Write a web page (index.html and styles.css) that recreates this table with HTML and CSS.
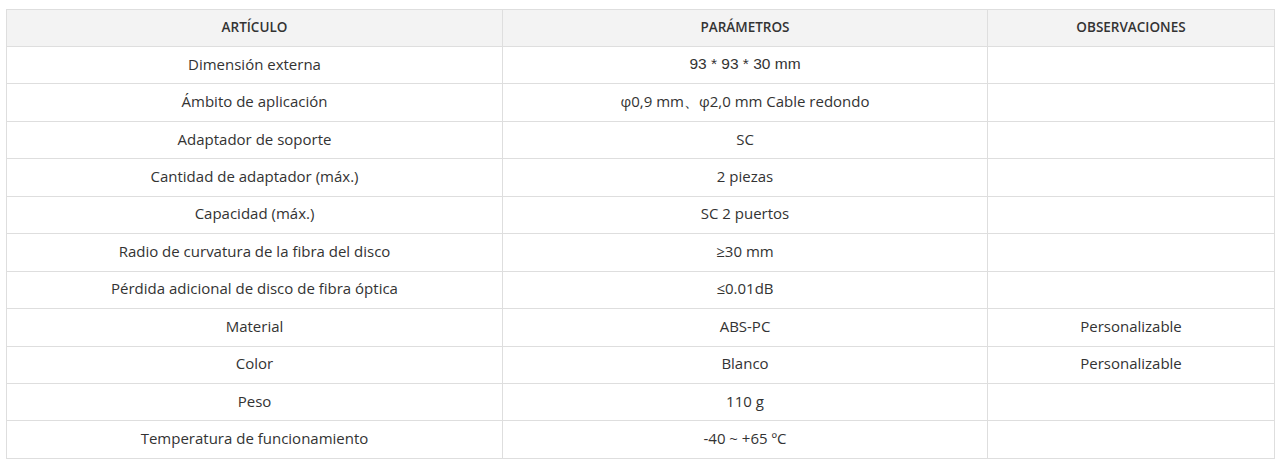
FILE: index.html
```html
<!DOCTYPE html>
<html lang="es">
<head>
<meta charset="utf-8">
<link rel="stylesheet" href="styles.css">
</head>
<body>
<table class="spec">
  <colgroup>
    <col class="c1"><col class="c2"><col class="c3">
  </colgroup>
  <thead>
    <tr><th>ARTÍCULO</th><th>PARÁMETROS</th><th>OBSERVACIONES</th></tr>
  </thead>
  <tbody>
    <tr><td>Dimensión externa</td><td class="alt">93 * 93 * 30 mm</td><td></td></tr>
    <tr><td>Ámbito de aplicación</td><td>φ0,9 mm、φ2,0 mm Cable redondo</td><td></td></tr>
    <tr><td>Adaptador de soporte</td><td>SC</td><td></td></tr>
    <tr><td>Cantidad de adaptador (máx.)</td><td>2 piezas</td><td></td></tr>
    <tr><td>Capacidad (máx.)</td><td>SC 2 puertos</td><td></td></tr>
    <tr><td>Radio de curvatura de la fibra del disco</td><td>≥30 mm</td><td></td></tr>
    <tr><td>Pérdida adicional de disco de fibra óptica</td><td>≤0.01dB</td><td></td></tr>
    <tr><td>Material</td><td>ABS-PC</td><td>Personalizable</td></tr>
    <tr><td>Color</td><td>Blanco</td><td>Personalizable</td></tr>
    <tr><td>Peso</td><td>110 g</td><td></td></tr>
    <tr><td>Temperatura de funcionamiento</td><td>-40 ~ +65 ºC</td><td></td></tr>
  </tbody>
</table>
</body>
</html>
```
FILE: styles.css
```css
html, body {
  margin: 0;
  background: #fff;
}
body {
  padding: 9px 7px 0 6px;
  font-family: "Open Sans", "Liberation Sans", sans-serif;
  color: #333;
}
.spec {
  width: 1268px;
  border-collapse: collapse;
  table-layout: fixed;
  font-size: 15px;
}
.c1 { width: 496px; }
.c2 { width: 485px; }
.c3 { width: 287px; }
.spec th,
.spec td {
  border: 1px solid #dedede;
  text-align: center;
  vertical-align: middle;
  padding: 0 8px 3px;
  line-height: 20px;
}
.spec th {
  height: 33px;
  background: #f3f3f3;
  font-weight: 600;
  font-size: 13.5px;
  color: #333;
}
.spec td {
  height: 33.45px;
}
.spec td.alt {
  font-family: "Liberation Sans", Arial, sans-serif;
  font-size: 15.5px;
}
```
